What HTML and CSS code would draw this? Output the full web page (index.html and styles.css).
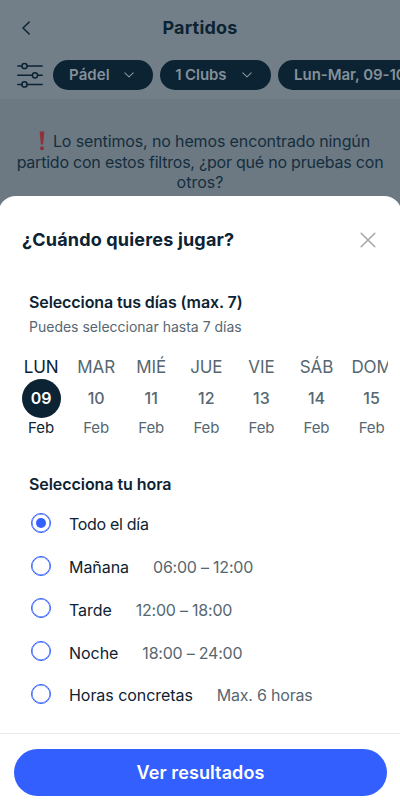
FILE: index.html
```
<!DOCTYPE html>
<html lang="es">
<head>
<meta charset="utf-8">
<meta name="viewport" content="width=device-width, initial-scale=1">
<title>Partidos</title>
<link rel="stylesheet" href="styles.css">
</head>
<body>
<main class="page">
  <header class="top">
    <div class="titlebar">
      <svg class="back" width="10" height="16" viewBox="0 0 10 16"><path d="M8.2 2 2 8l6.2 6"/></svg>
      <h1>Partidos</h1>
    </div>
    <div class="filters">
      <svg class="sliders" width="26" height="26" viewBox="0 0 26 26"><path d="M.8 4H5m5 0h15.2M.8 13.3h14.7m5 0h4.7M.8 22.4H5m5 0h15.2"/><circle cx="7.5" cy="4" r="2.6"/><circle cx="18" cy="13.3" r="2.6"/><circle cx="7.5" cy="22.4" r="2.6"/></svg>
      <div class="pill pill-sport"><span>Pádel</span><svg width="10" height="6" viewBox="0 0 10 6"><path d="m.8.8 4.2 4 4.2-4"/></svg></div>
      <div class="pill pill-clubs"><span>1 Clubs</span><svg width="10" height="6" viewBox="0 0 10 6"><path d="m.8.8 4.2 4 4.2-4"/></svg></div>
      <div class="pill pill-dates"><span>Lun-Mar, 09-10</span></div>
    </div>
  </header>
  <p class="empty"><span class="line l1"><svg class="alert" width="6" height="20" viewBox="0 0 6 20"><path d="M.6.8Q3-.1 5.4.8L4.1 13.5H1.9z"/><circle cx="3" cy="17.2" r="2"/></svg>Lo sentimos, no hemos encontrado ningún</span><span class="line l2">partido con estos filtros, ¿por qué no pruebas con</span><span class="line l3">otros?</span></p>
</main>
<section class="sheet">
  <div class="sheet-head">
    <h2>¿Cuándo quieres jugar?</h2>
    <svg width="16" height="16" viewBox="0 0 16 16"><path d="m1.2 1.2 13.6 13.6M14.8 1.2 1.2 14.8"/></svg>
  </div>
  <h3 class="days-title">Selecciona tus días (max. 7)</h3>
  <p class="hint">Puedes seleccionar hasta 7 días</p>
  <div class="days">
    <div class="day selected"><span class="name">LUN</span><b>09</b><span class="month">Feb</span></div>
    <div class="day"><span class="name">MAR</span><b>10</b><span class="month">Feb</span></div>
    <div class="day"><span class="name">MIÉ</span><b>11</b><span class="month">Feb</span></div>
    <div class="day"><span class="name">JUE</span><b>12</b><span class="month">Feb</span></div>
    <div class="day"><span class="name">VIE</span><b>13</b><span class="month">Feb</span></div>
    <div class="day"><span class="name">SÁB</span><b>14</b><span class="month">Feb</span></div>
    <div class="day"><span class="name">DOM</span><b>15</b><span class="month">Feb</span></div>
  </div>
  <h3 class="hour-title">Selecciona tu hora</h3>
  <div class="options">
    <div class="option checked"><i></i><span>Todo el día</span></div>
    <div class="option"><i></i><span>Mañana</span><em>06:00 – 12:00</em></div>
    <div class="option"><i></i><span>Tarde</span><em>12:00 – 18:00</em></div>
    <div class="option"><i></i><span>Noche</span><em>18:00 – 24:00</em></div>
    <div class="option"><i></i><span>Horas concretas</span><em>Max. 6 horas</em></div>
  </div>
  <footer><button type="button">Ver resultados</button></footer>
</section>
</body>
</html>
```
FILE: styles.css
```
* { box-sizing: border-box; }
body {
  margin: 0;
  height: 811px;
  position: relative;
  overflow: hidden;
  background: #6c7983;
  font-family: Inter, "Liberation Sans", sans-serif;
  color: #0c2333;
}
h1, h2, h3, p { margin: 0; }
svg { fill: none; stroke: currentColor; stroke-linecap: round; stroke-linejoin: round; flex: none; }
.top { height: 99px; background: #727f88; overflow: hidden; }
.titlebar { height: 60px; padding: 0 21px 4px; display: grid; grid-template-columns: 10px 1fr 10px; align-items: center; }
.back { stroke-width: 1.5; }
h1 { font-size: 18px; line-height: 24px; font-weight: 700; text-align: center; letter-spacing: .2px; }
.filters { display: flex; gap: 7.5px; padding-left: 16.5px; }
.sliders { stroke-width: 1.5; margin: 2px 3px 0 0; }
.pill { height: 30px; border-radius: 15px; background: #0c2333; color: #84909a; display: flex; align-items: center; justify-content: space-between; font-size: 15px; line-height: 20px; font-weight: 600; flex: none; white-space: nowrap; padding: 0 19px 0 16px; }
.pill svg { stroke-width: 1.1; }
.pill-sport { width: 99.7px; letter-spacing: .1px; }
.pill-clubs { width: 110.4px; padding-left: 15px; letter-spacing: -.1px; }
.pill-dates { width: 160px; letter-spacing: -.05px; }
.empty { padding-top: 32px; font-size: 16px; line-height: 20.6px; color: #152e3e; }
.line { display: flex; justify-content: center; white-space: nowrap; }
.l1 { letter-spacing: -.13px; padding-left: 9px; }
.l2 { letter-spacing: -.22px; }
.alert { stroke: none; fill: #8c3238; margin: 0 8px 0 0; }
.sheet { position: absolute; left: -2px; top: 196px; width: 404px; height: 615px; padding: 0 2px; background: #fff; border-radius: 18px 18px 0 0; display: flex; flex-direction: column; }
.sheet-head { display: flex; justify-content: space-between; align-items: center; height: 88px; padding: 0 24.5px 0 22px; }
.sheet-head svg { color: #a2a5a8; stroke-width: 1.5; }
h2 { font-size: 18px; line-height: 24px; font-weight: 700; letter-spacing: .18px; }
h3 { font-size: 16px; line-height: 22px; font-weight: 600; padding-left: 29px; }
.days-title { margin-top: 7px; letter-spacing: -.1px; }
.hint { font-size: 14px; line-height: 20px; padding-left: 29px; margin-top: 4px; color: #566771; }
.days { display: flex; margin: 19px 12.5px 0 13.5px; overflow: hidden; }
.day { flex: none; width: 55.1px; display: flex; flex-direction: column; align-items: center; color: #566771; }
.name { font-size: 17px; line-height: 22px; white-space: nowrap; letter-spacing: -.1px; }
.day b { width: 39px; height: 39px; margin: .5px 0; border-radius: 50%; display: flex; align-items: center; justify-content: center; font-size: 16px; font-weight: 500; }
.month { font-size: 15px; line-height: 20px; letter-spacing: -.1px; }
.selected { color: #0c2333; }
.selected b { background: #0c2333; color: #fff; font-weight: 600; }
.hour-title { margin-top: 35px; letter-spacing: -.06px; }
.options { margin-top: 7px; }
.option { height: 42.75px; display: flex; align-items: center; padding-left: 31px; font-size: 16px; line-height: 22px; white-space: nowrap; letter-spacing: -.05px; }
.option i { width: 20px; height: 20px; border: 1.5px solid #335fff; border-radius: 50%; margin: -1px 18px 0 0; flex: none; display: grid; place-items: center; box-shadow: inset 0 0 0 .5px #335fff; }
.checked { letter-spacing: -.3px; }
.checked i::before { content: ""; width: 10px; height: 10px; border-radius: 50%; background: #335fff; }
.option span { margin-top: 2px; }
.checked span { letter-spacing: -.3px; }
.option em { font-style: normal; color: #566771; margin: 2px 0 0 24px; letter-spacing: -.22px; }
footer { margin: auto -2px 0; height: 78px; border-top: 1px solid #e6e8e9; padding: 15px 15px 0 16px; }
button { display: block; width: 100%; height: 47px; border: 0; border-radius: 24px; background: #335fff; color: #fff; font: 600 18px Inter, "Liberation Sans", sans-serif; letter-spacing: .1px; padding: 0; }
```
